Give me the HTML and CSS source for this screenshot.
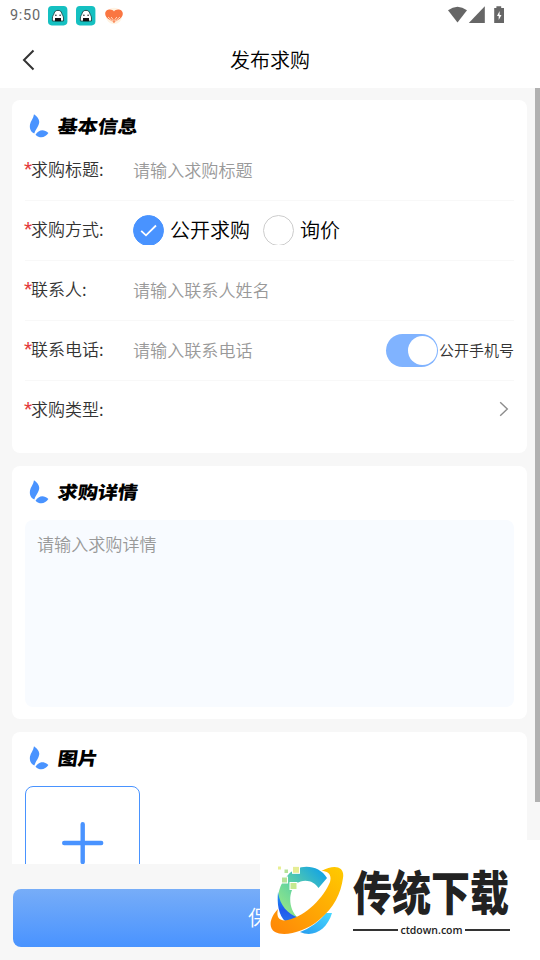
FILE: index.html
```html
<!DOCTYPE html>
<html lang="zh-CN">
<head>
<meta charset="utf-8">
<title>发布求购</title>
<link rel="stylesheet" href="styles.css">
</head>
<body>
<svg class="defs" width="0" height="0">
  <symbol id="leaf" viewBox="0 0 20 26">
    <path d="M5 1.200C7.500 3 10.800 6.200 10.200 9.600C9.600 14 7 15.500 5.300 20.600C1.500 18.600 .400 15.500 1 11.500C1.600 8 4.400 5.500 5 1.200Z"/>
    <path d="M6.500 21.700C9.500 17 14.500 15.500 19.400 20C16.500 24.500 11 26 6.500 21.700Z"/>
  </symbol>
  <symbol id="face" viewBox="0 0 20 20">
    <rect width="19.4" height="19.4" rx="3.8" fill="#15c0c1"/>
    <path d="M4.4 15V12C4.400 10 5.800 8.800 6.100 7.400C6.600 5.200 8 4.400 10 4.400S13.300 5.200 13.800 7.400C14.100 8.800 15.500 10 15.500 12V15Z" fill="#fff" stroke="#173334" stroke-width=".8"/>
    <path d="M7 12H13V15.200H7Z" fill="#111"/><circle cx="7.9" cy="9.3" r=".7"/><circle cx="12.1" cy="9.3" r=".7"/>
  </symbol>
</svg>
<div class="screen">
  <div class="status">
    <span class="time">9:50</span>
    <svg class="app" viewBox="0 0 20 20"><use href="#face"/></svg>
    <svg class="app second" viewBox="0 0 20 20"><use href="#face"/></svg>
    <svg class="heart" width="20" height="18" viewBox="0 0 20 18"><circle cx="10" cy="9" r="8.2" fill="#fff3e3"/><path d="M10 4.600C12 1.400 19 2 18.800 7C18.500 11.400 13.600 12.700 10 16C6.400 12.700 1.500 11.400 1.200 7C1 2 8 1.400 10 4.600Z" fill="#fa7642"/><path d="M4 10L9 14.500V12.500L7.200 10M16 10L11 14.500V12.500L12.800 10" fill="none" stroke="#fff1dd" stroke-width=".8"/></svg>
    <svg class="system" width="58" height="18" viewBox="0 0 58 18" fill="#666"><path d="M0 4.200Q9.500-2.800 19 4.200L9.500 16.500Z"/><path d="M36.800.300V17H20.800Z"/><path d="M46.200 2H48.400V.300H53.200V2H56V17H46.200Z"/><path d="M51.600 5L49 10H50.700V14L53.500 9H51.600Z" fill="#fff"/></svg>
  </div>
  <header>
    <svg class="back" width="14" height="22" viewBox="0 0 14 22"><path d="M11.500 1.500L2 11L11.500 20.500"/></svg>
    <h1>发布求购</h1>
  </header>
  <main>
    <section class="card basic">
      <h2><svg class="leaf"><use href="#leaf"/></svg><span>基本信息</span></h2>
      <div class="row"><label><i>*</i>求购标题:</label><span class="hint">请输入求购标题</span></div>
      <div class="row"><label><i>*</i>求购方式:</label>
        <div class="choices"><span class="radio on"><svg width="31" height="31" viewBox="0 0 31 31"><path d="M8.200 15.800L13 20.300L23 10.500"/></svg></span><b>公开求购</b><span class="radio"></span><b>询价</b></div>
      </div>
      <div class="row"><label><i>*</i>联系人:</label><span class="hint">请输入联系人姓名</span></div>
      <div class="row"><label><i>*</i>联系电话:</label><span class="hint">请输入联系电话</span><span class="switch"></span><span class="public">公开手机号</span></div>
      <div class="row"><label><i>*</i>求购类型:</label><svg class="next" width="10" height="16" viewBox="0 0 10 16"><path d="M1.200 1.200L8.300 8L1.200 14.800"/></svg></div>
    </section>
    <section class="card detail">
      <h2><svg class="leaf"><use href="#leaf"/></svg><span>求购详情</span></h2>
      <div class="textarea">请输入求购详情</div>
    </section>
    <section class="card photos">
      <h2><svg class="leaf"><use href="#leaf"/></svg><span>图片</span></h2>
      <div class="upload"><svg width="42" height="42" viewBox="0 0 42 42"><path d="M2.200 21H39.200M20.700 2.200V40"/></svg></div>
    </section>
  </main>
  <footer><div class="save">保存</div></footer>
  <div class="scrollbar"></div>
  <div class="brand">
    <svg class="emblem" width="76" height="72" viewBox="0 0 76 72">
      <defs>
        <linearGradient id="c" x1="0" y1="1" x2="1" y2="0"><stop offset="0" stop-color="#a5ee80"/><stop offset=".4" stop-color="#69d69c"/><stop offset="1" stop-color="#059bf0"/></linearGradient>
        <linearGradient id="o" x1="0" y1="1" x2="1" y2="0"><stop offset="0" stop-color="#ff8508"/><stop offset="1" stop-color="#ffcb00"/></linearGradient>
        <linearGradient id="b" x1="0" y1="0" x2="0" y2="1"><stop offset="0" stop-color="#1a9df5"/><stop offset=".6" stop-color="#2159ed"/><stop offset="1" stop-color="#2870ee"/></linearGradient>
        <linearGradient id="d" x1="0" y1="1" x2="1" y2="0"><stop offset="0" stop-color="#269bee"/><stop offset="1" stop-color="#48d9ff"/></linearGradient>
      </defs>
      <path d="M57 12C49-2 28-3 18 9C8 19 6 34 10 43Q16 53 28 52C18 43 18 26 26 18C34 12 44 15 48.500 22Z" fill="url(#c)"/>
      <path d="M8 26C10 40 18 48 28 51.500L16 56C8 49 7 37 8 26Z" fill="url(#b)"/>
      <path d="M30 66Q46 60 56 47L62 47C57 64 43 72 30 66Z" fill="url(#d)"/>
      <path d="M51.500 5C64-2 75 0 73 12C71 27 64 42 49 54C35 66 14 71 5 66C-3 61 1 50 8 43C6 51 9 56 18 54C36 50 54 31 60 16C62 8 58 5 51.500 5Z" fill="url(#o)"/>
      <g fill="#b5e298" stroke="#fff"><rect x="7.5" y="0" width="4" height="4" fill="#e8ef94"/><rect x="14" y="3" width="4.5" height="4.5"/><rect x="22.5" y=".3" width="7" height="7" fill="#e6ed94"/><rect x="11.5" y="11" width="6" height="6"/><rect x="20" y="16.5" width="7" height="7" fill="#c6e990"/></g>
    </svg>
    <div class="wordmark"><div class="name">传统下载</div><div class="site"><span>ctdown.com</span></div></div>
  </div>
</div>
</body>
</html>
```
FILE: styles.css
```css
*, *::before { box-sizing: border-box; }
body { margin: 0; font-family: "Noto Sans CJK SC", sans-serif; font-weight: 350; color: #333; }
.defs { position: absolute; }
.screen { position: relative; width: 540px; height: 960px; overflow: hidden; background: #f7f7f7; display: flex; flex-direction: column; }
.status { height: 32px; flex: none; background: #fff; display: flex; align-items: flex-start; padding: 6px 34px 0 10px; }
.time { font: 400 14.5px/20px Roboto, sans-serif; color: #686868; width: 38px; letter-spacing: .7px; }
.app { width: 20px; height: 20px; }
.second { margin-left: 8px; }
.heart { margin: 1px 0 0 8px; }
.system { margin-left: auto; }
header { height: 56px; flex: none; background: #fff; display: grid; grid-template-columns: 60px 1fr 60px; align-items: center; }
.back { margin-left: 22px; margin-top: -1px; fill: none; stroke: #333; stroke-width: 2; }
h1 { margin: 0; text-align: center; font-size: 20px; line-height: 30px; font-weight: 350; color: #000; }
main { height: 776px; flex: none; overflow: hidden; padding: 12px 13px 0 12px; display: flex; flex-direction: column; gap: 13px; }
.card { background: #fff; border-radius: 8px; padding: 0 13px; flex: none; }
.basic { height: 353px; }
.detail { height: 253px; }
.photos { height: 180px; }
h2 { margin: 0; height: 40px; padding: 13px 0 0 4px; display: flex; font-size: 20px; line-height: 26px; font-weight: 900; color: #000; }
h2 span { margin-left: 9px; transform: skewX(-8deg) scaleY(.9); }
.leaf { width: 20px; height: 26px; fill: #4993ff; flex: none; }
.row { height: 60px; display: flex; align-items: center; }
.row + .row { border-top: 1px solid #f8f8f8; padding-bottom: 2px; }
label { width: 108px; flex: none; font-size: 17px; line-height: 26px; display: flex; margin-top: -2px; }
label i { width: 7px; margin-left: -1px; color: #e43d3d; font: 400 19px/26px Roboto, sans-serif; }
.hint { font-size: 17.1px; line-height: 26px; color: #999; }
.choices { display: flex; align-items: center; height: 30px; }
.choices b { font-weight: 350; font-size: 20px; line-height: 28px; color: #000; margin: 1px 13px 0 6px; }
.radio { width: 31px; height: 30px; overflow: hidden; flex: none; }
.radio::before { content: ""; display: block; width: 31px; height: 31px; border: 1px solid #ccc; border-radius: 50%; }
.radio.on::before { background: #4993ff; border-color: #4993ff; }
.radio svg { display: block; margin-top: -31px; position: relative; fill: none; stroke: #fff; stroke-width: 1.8; }
.switch { margin-left: auto; margin-top: 1px; width: 52px; height: 33px; border-radius: 17px; background: #80b3ff; padding: 2px 1px; display: flex; justify-content: flex-end; flex: none; }
.switch::before { content: ""; width: 29px; height: 29px; border-radius: 50%; background: #fff; }
.public { font-size: 15px; line-height: 22px; margin-left: 1px; white-space: nowrap; }
.next { margin: -2px 5px 0 auto; fill: none; stroke: #8c8c8c; stroke-width: 1.4; }
.textarea { height: 187px; margin-top: 14px; border-radius: 8px; background: #f8fbff; padding: 11px 12px; color: #999; font-size: 17.1px; line-height: 26px; }
.upload { width: 115px; height: 115px; margin-top: 14px; border: 1px solid #4993ff; border-radius: 8px; display: flex; justify-content: center; }
.upload svg { margin-top: 35px; fill: none; stroke: #4993ff; stroke-width: 4.4; stroke-linecap: round; }
footer { height: 96px; padding: 25px 13px 13px; }
.save { height: 58px; border-radius: 8px; background: linear-gradient(#77adf8, #4993ff); color: #fff; text-align: center; font-size: 21px; line-height: 54px; padding-right: 2px; }
.scrollbar { position: absolute; right: 0; top: 88px; width: 5px; height: 714px; background: #b1b1b1; }
.brand { position: absolute; right: 0; bottom: 0; width: 280px; height: 120px; background: #fff; display: flex; padding: 26px 0 0 10px; }
.emblem { flex: none; }
.wordmark { margin-left: 7px; width: 157px; }
.name { font-size: 39px; line-height: 48px; height: 50px; font-weight: 900; color: #222; white-space: nowrap; transform: scaleY(1.2); }
.site { display: flex; align-items: center; gap: 2px; margin-top: 6px; font: 600 10.5px/16px "Open Sans", sans-serif; color: #222; }
.site::before, .site::after { content: ""; height: 2px; background: #333; flex: 1; }
```
